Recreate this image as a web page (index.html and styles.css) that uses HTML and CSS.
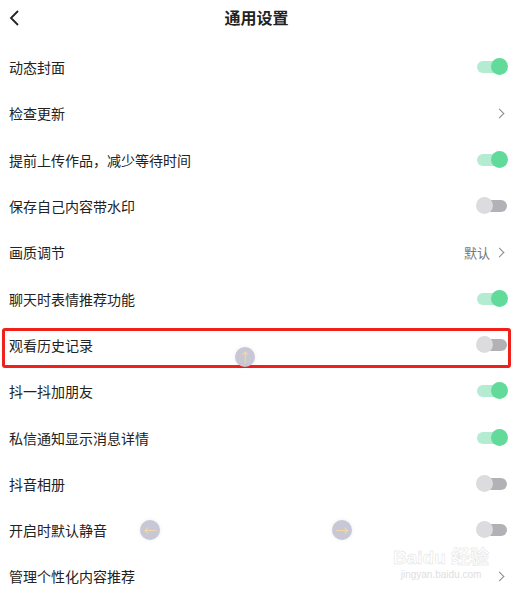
FILE: index.html
```html
<!DOCTYPE html>
<html lang="zh-CN">
<head>
    <meta charset="UTF-8">
    <meta name="viewport" content="width=device-width, initial-scale=1.0">
    <title>通用设置</title>
    <link rel="stylesheet" href="styles.css">
</head>
<body>
    <header class="topbar">
        <svg class="back" width="14" height="18" viewBox="0 0 14 18"><path d="M10 2 L3 9 L10 16" fill="none" stroke="#222" stroke-width="1.8"/></svg>
        <h1>通用设置</h1>
    </header>

    <main class="list">
        <div class="row"><span>动态封面</span><i class="toggle on"></i></div>
        <div class="row"><span>检查更新</span><i class="chev"></i></div>
        <div class="row"><span>提前上传作品，减少等待时间</span><i class="toggle on"></i></div>
        <div class="row"><span>保存自己内容带水印</span><i class="toggle"></i></div>
        <div class="row"><span>画质调节</span><span class="value">默认</span><i class="chev"></i></div>
        <div class="row"><span>聊天时表情推荐功能</span><i class="toggle on"></i></div>
        <div class="row marked"><span>观看历史记录</span><i class="toggle"></i>
            <b class="dot dot-up">↑</b>
        </div>
        <div class="row"><span>抖一抖加朋友</span><i class="toggle on"></i></div>
        <div class="row"><span>私信通知显示消息详情</span><i class="toggle on"></i></div>
        <div class="row"><span>抖音相册</span><i class="toggle"></i></div>
        <div class="row"><span>开启时默认静音</span><i class="toggle"></i>
            <b class="dot dot-left">←</b>
            <b class="dot dot-right">→</b>
        </div>
        <div class="row"><span>管理个性化内容推荐</span><i class="chev"></i>
            <div class="mark">
                <div class="mark-top">Bai<span class="paw">du</span> 经验</div>
                <div class="mark-url">jingyan.baidu.com</div>
            </div>
        </div>
    </main>
</body>
</html>
```

FILE: styles.css
```css
body {
    margin: 0;
    width: 513px;
    height: 601px;
    overflow: hidden;
    background: #fff;
    font-family: "Noto Sans CJK SC", "Noto Sans", sans-serif;
    color: #222;
}
.topbar {
    position: relative;
    height: 44px;
    display: flex;
    align-items: center;
    justify-content: center;
}
.topbar h1 {
    margin: 0 0 10px;
    font-size: 16px;
    font-weight: 700;
    color: #222;
}
.back {
    position: absolute;
    left: 8px;
    top: 9px;
}
.list {
    display: flex;
    flex-direction: column;
}
.row {
    position: relative;
    height: 46.3px;
    display: flex;
    align-items: center;
    padding: 0 6px 0 9px;
    font-size: 14px;
    line-height: 1;
}
.row > span:first-child {
    flex: 1;
}
.value {
    color: #777;
    font-size: 13px;
    margin-right: 6px;
}
.chev {
    width: 6px;
    height: 6px;
    border-right: 1.3px solid #888;
    border-top: 1.3px solid #888;
    transform: rotate(45deg);
    margin-right: 4px;
}
.toggle {
    position: relative;
    width: 30px;
    height: 12px;
    border-radius: 6px;
    background: #b2b2b6;
}
.toggle::after {
    content: "";
    position: absolute;
    left: -1px;
    top: -3px;
    width: 17px;
    height: 17px;
    border-radius: 50%;
    background: #dcdcde;
}
.toggle.on {
    background: #b3ecd0;
}
.toggle.on::after {
    left: auto;
    right: -1px;
    background: #62da9a;
}
.marked::before {
    content: "";
    position: absolute;
    left: 2px;
    right: 2px;
    top: 6px;
    bottom: 0;
    border: 3px solid #f0201a;
    border-radius: 3px;
}
.dot {
    position: absolute;
    width: 20px;
    height: 20px;
    border-radius: 50%;
    background: #c7c7d6;
    box-shadow: 0 0 4px rgba(0, 0, 0, 0.08);
    color: #f4d7a8;
    font-size: 13px;
    font-weight: 400;
    text-align: center;
    line-height: 20px;
}
.dot-up {
    left: 235px;
    top: 25px;
}
.dot-left {
    left: 140px;
    top: 13px;
}
.dot-right {
    left: 332px;
    top: 13px;
}
.mark {
    position: absolute;
    left: 393px;
    top: -5px;
    color: rgba(210, 210, 210, 0.7);
    font-family: "Liberation Sans", "Noto Sans CJK SC", sans-serif;
    text-align: center;
}
.mark-top {
    font-size: 19px;
    font-weight: 700;
    -webkit-text-stroke: 0.5px #e2e2e2;
    color: #fff;
}
.mark-url {
    font-size: 10px;
    margin-top: 3px;
    color: #e0e0e0;
}
```
